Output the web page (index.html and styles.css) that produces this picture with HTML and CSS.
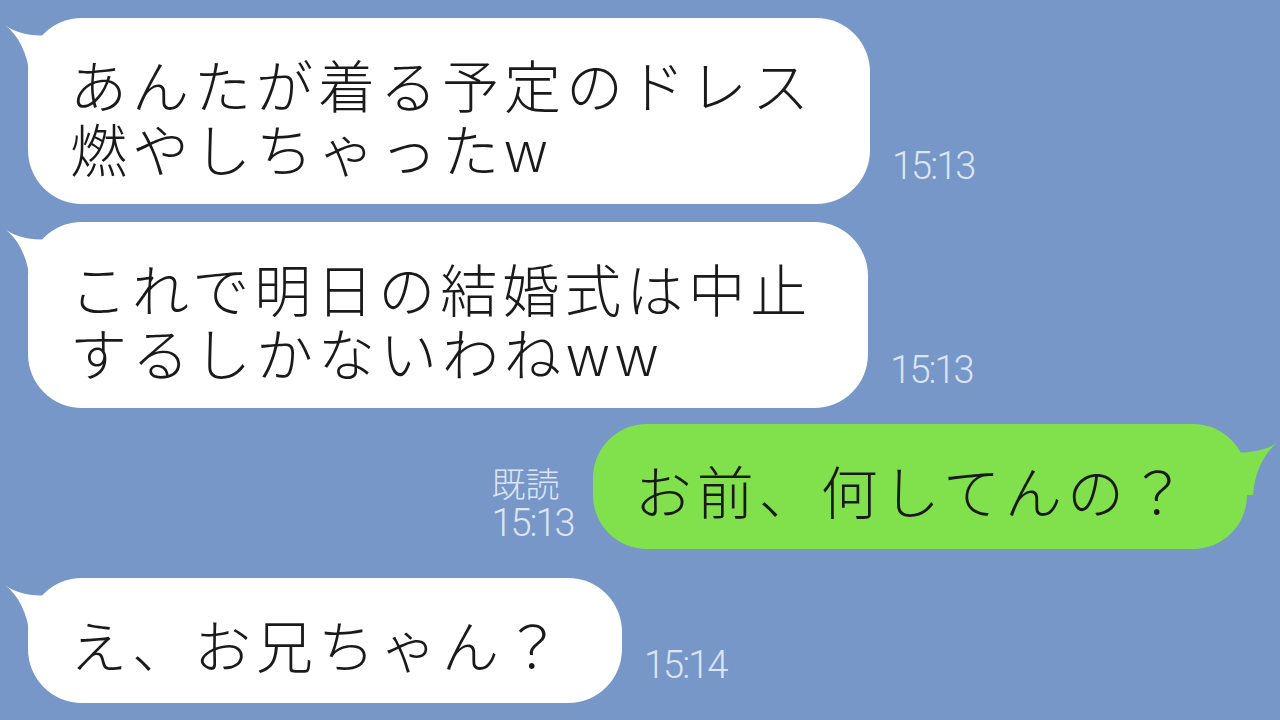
FILE: index.html
```html
<!DOCTYPE html>
<html lang="ja">
<head>
    <meta charset="UTF-8">
    <meta name="viewport" content="width=device-width, initial-scale=1.0">
    <title>トーク</title>
    <link rel="stylesheet" href="styles.css">
</head>
<body>
    <div class="chat">
        <div class="row in">
            <div class="bubble white">
                <svg class="tail" width="60" height="60" viewBox="0 0 60 60"><path d="M0 7 C10 15 30 20 50 16 L50 60 L25 60 C23 35 13 17 0 7 Z"/></svg>
                <p>あんたが着る予定のドレス<br>燃やしちゃったw</p>
            </div>
            <div class="time">15:13</div>
        </div>

        <div class="row in second">
            <div class="bubble white">
                <svg class="tail" width="60" height="60" viewBox="0 0 60 60"><path d="M0 7 C10 15 30 20 50 16 L50 60 L25 60 C23 35 13 17 0 7 Z"/></svg>
                <p>これで明日の結婚式は中止<br>するしかないわねww</p>
            </div>
            <div class="time">15:13</div>
        </div>

        <div class="row out">
            <div class="read">
                <span class="read-label">既読</span>
                <span class="read-time">15:13</span>
            </div>
            <div class="bubble green single">
                <svg class="tail" width="60" height="60" viewBox="0 0 60 60"><path d="M0 7 C10 15 30 20 50 16 L50 60 L25 60 C23 35 13 17 0 7 Z"/></svg>
                <p>お前、何してんの？</p>
            </div>
        </div>

        <div class="row in last">
            <div class="bubble white single">
                <svg class="tail" width="60" height="60" viewBox="0 0 60 60"><path d="M0 7 C10 15 30 20 50 16 L50 60 L25 60 C23 35 13 17 0 7 Z"/></svg>
                <p>え、お兄ちゃん？</p>
            </div>
            <div class="time">15:14</div>
        </div>
    </div>
</body>
</html>
```

FILE: styles.css
```css
body {
    margin: 0;
    padding: 0;
    background-color: #7797c8;
    font-family: "Noto Sans CJK JP", "Noto Sans", sans-serif;
    color: #1a1a1a;
    width: 1280px;
    height: 720px;
    overflow: hidden;
}

.chat {
    padding: 18px 0 0 28px;
}

.row {
    display: flex;
    align-items: flex-end;
}

.row.in {
    gap: 22px;
}

.row.second {
    margin-top: 18px;
}

.row.out {
    justify-content: flex-end;
    padding-right: 33px;
    margin-top: 16px;
    gap: 19px;
}

.row.last {
    margin-top: 29px;
}

.bubble {
    position: relative;
    border-radius: 54px;
    padding: 33px 56px 25px 42px;
}

.bubble.single {
    padding-bottom: 28px;
}

.bubble p {
    margin: 0;
    font-size: 57px;
    font-weight: 300;
    line-height: 64px;
    letter-spacing: 5px;
    white-space: nowrap;
}

.white {
    background-color: #ffffff;
}

.green {
    background-color: #81e14c;
}

.tail {
    position: absolute;
    top: 0;
    left: -23px;
}

.white .tail {
    fill: #ffffff;
}

.green .tail {
    fill: #81e14c;
    left: auto;
    right: -31px;
    top: 11px;
    transform: scaleX(-1);
}

.time {
    font-family: Roboto, "Liberation Sans", sans-serif;
    font-weight: 300;
    font-size: 38px;
    line-height: 36px;
    letter-spacing: -2px;
    color: #dce5f3;
    margin-bottom: 20px;
}

.read {
    display: flex;
    flex-direction: column;
    margin-bottom: 6px;
    color: #dce5f3;
}

.read-label {
    font-size: 34px;
    font-weight: 300;
    line-height: 40px;
}

.read-time {
    font-family: Roboto, "Liberation Sans", sans-serif;
    font-weight: 300;
    font-size: 38px;
    line-height: 40px;
    letter-spacing: -2px;
}
```
